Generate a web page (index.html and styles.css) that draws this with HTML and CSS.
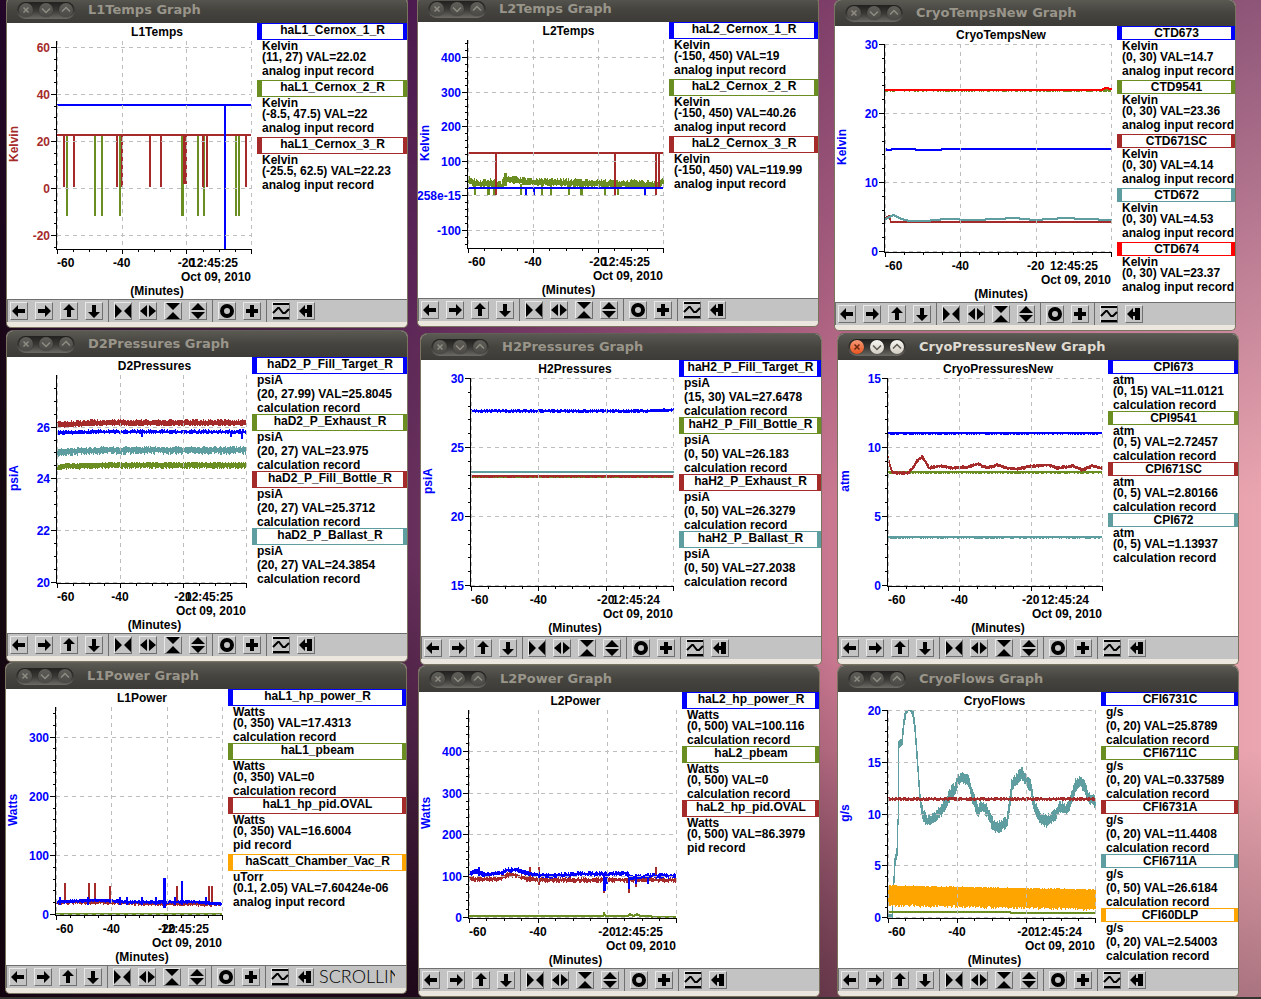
FILE: index.html
```html
<!DOCTYPE html>
<html lang="en">
<head>
  <meta charset="UTF-8" />
  <meta name="viewport" content="width=device-width, initial-scale=1.0"/>
  <title>Target Strip Charts</title>
  <link rel="stylesheet" href="styles.css">
</head>
<body>
  <main class="desktop" id="desktop"></main>
  <div class="panel-edge"></div>
  <script src="script.js"></script>
</body>
</html>
```

FILE: styles.css
```css
body {
  margin: 0;
  height: 100vh;
  overflow: hidden;
  font-family: "Liberation Sans", Arial, sans-serif;
  background:
    radial-gradient(ellipse 60% 50% at 30% 105%, rgba(15, 0, 12, 0.85), rgba(15, 0, 12, 0)),
    linear-gradient(to bottom, rgba(50, 5, 65, 0.5) 0%, rgba(60, 10, 70, 0) 50%, rgba(20, 0, 15, 0) 75%, rgba(20, 0, 15, 0.3) 100%),
    linear-gradient(to right, #14070f 0%, #260f22 3%, #67305c 33%, #c97890 66%, #eaa6b0 100%);
}

.desktop {
  position: relative;
  height: 100%;
}

.panel-edge {
  position: absolute;
  left: 0;
  right: 0;
  bottom: 0;
  height: 2px;
  background: #35332f;
}

/* windows on the desktop */
.window {
  position: absolute;
  width: 400px;
  border: 1px solid #7a735f;
  border-top-color: #62605a;
  border-radius: 7px 7px 5px 5px;
  background: #ece7de;
  padding-bottom: 5px;
  overflow: hidden;
}

.win-l1temps { left: 6px; top: -4px; }
.win-l2temps { left: 417px; top: -5px; }
.win-cryotemps { left: 834px; top: -1px; }
.win-d2pressures { left: 6px; top: 330px; }
.win-h2pressures { left: 420px; top: 333px; }
.win-cryopressures { left: 837px; top: 333px; }
.win-l1power { left: 5px; top: 662px; }
.win-l2power { left: 418px; top: 665px; }
.win-cryoflows { left: 837px; top: 665px; }

.titlebar {
  display: flex;
  align-items: center;
  gap: 13px;
  height: 26px;
  padding-left: 10px;
  background: linear-gradient(#5a5952, #45443f 50%, #3c3b37);
}

.titlebar h2 {
  margin: 0;
  font: bold 13px/26px "DejaVu Sans", sans-serif;
  color: #99958a;
}

.active .titlebar h2 {
  color: #dfdbd2;
}

.win-buttons {
  display: flex;
  align-items: center;
  gap: 6px;
  height: 17px;
  width: 54px;
  padding: 0 2px;
  border-radius: 9px;
  background: linear-gradient(#22211f, #3a3936 50%, #6c6b65);
}

.win-buttons button {
  width: 14px;
  height: 14px;
  padding: 0;
  border: 0;
  border-radius: 50%;
  background: linear-gradient(#5f5e59, #4a4945);
  box-shadow: 0 0 1px #1c1b19;
  color: #8f8c83;
}

.active .win-buttons button {
  background: linear-gradient(#f8f6f2, #d2cdc3);
  color: #5a5850;
}

.active .win-buttons button.close {
  background: linear-gradient(#f79a76, #e9541f);
  color: #6b2710;
}

.win-buttons svg {
  display: block;
  width: 14px;
  height: 14px;
  fill: none;
  stroke: currentColor;
  stroke-width: 1.5;
}

.content {
  display: flex;
  height: 276px;
  background: #fff;
}

/* chart */
.chart {
  flex: 1;
  min-width: 0;
  overflow: hidden;
}

.chart svg {
  display: block;
  width: 100%;
  height: 276px;
}

.chart text {
  font-size: 12px;
  font-weight: bold;
}

.mid { text-anchor: middle; }
.end { text-anchor: end; }

.axis {
  stroke: #000;
  shape-rendering: crispEdges;
}

.grid {
  stroke: #bebebe;
  stroke-dasharray: 4 4;
  shape-rendering: crispEdges;
}

.trace {
  fill: none;
  shape-rendering: crispEdges;
}

/* legend */
.legend {
  flex: none;
  font-size: 12px;
  font-weight: bold;
  line-height: 12px;
  white-space: nowrap;
  overflow: hidden;
}

.legend dl {
  margin: 0;
}

.legend dt {
  box-sizing: border-box;
  height: 14px;
  border-style: solid;
  border-width: 1px 4px 1px 5px;
  text-align: center;
}

.legend dt.tall {
  height: 17px;
}

.legend dd {
  margin: 0;
  padding-left: 5px;
  height: 14px;
}

.legend .unit { height: 11px; }
.legend .unit.tall { height: 14px; }
.legend .record { height: 12px; }
.legend .record.tall { height: 15px; }

.blue { border-color: #0000ff; stroke: #0000ff; }
.green { border-color: #6b8e23; stroke: #6b8e23; }
.brown { border-color: #a52a2a; stroke: #a52a2a; }
.teal { border-color: #5f9ea0; stroke: #5f9ea0; }
.orange { border-color: #ffa500; stroke: #ffa500; }
.red { border-color: #ff0000; stroke: #ff0000; }

.label-blue { fill: #0000ff; }
.label-brown { fill: #a52a2a; }

/* toolbar */
.toolbar {
  box-sizing: border-box;
  display: flex;
  height: 23px;
  border-top: 1px solid #6f6f6f;
  background: #c3c3c3;
}

.group {
  display: flex;
  align-items: center;
  gap: 7px;
  padding: 0 5px;
  border-left: 1px solid #6f6f6f;
}

.group:first-child {
  padding-left: 2px;
}

.group button {
  box-sizing: border-box;
  width: 18px;
  height: 18px;
  padding: 0;
  border: 1px solid;
  border-color: #e9e9e9 #6f6f6f #6f6f6f #e9e9e9;
  background: #c3c3c3;
}

.group svg {
  display: block;
  margin: -1px;
  width: 18px;
  height: 18px;
}

.status {
  width: 76px;
  overflow: hidden;
  white-space: nowrap;
  font: 300 18px/21px Lato, "Liberation Sans", sans-serif;
}
```

FILE: script.js
```js
// plot area inside the graph column
const LEFT = 50, TOP = 18, BOTTOM = 225;

// trace: color, [x, y] points, noise above, noise below, half thickness
// spikes: color, y from, y to, list of x, width
const windows = [
  {
    id: "l1temps", name: "L1Temps", unit: "Kelvin", label: "brown", legend: 150,
    min: -25.5, max: 62.5, major: 20, minor: 5, time: "12:45:25",
    pens: [
      ["blue", "haL1_Cernox_1_R", "Kelvin", "(11, 27) VAL=22.02", "analog input record"],
      ["green", "haL1_Cernox_2_R", "Kelvin", "(-8.5, 47.5) VAL=22", "analog input record"],
      ["brown", "haL1_Cernox_3_R", "Kelvin", "(-25.5, 62.5) VAL=22.23", "analog input record"]
    ],
    draw: [
      { c: "green", spikes: [60, 88, 95, 113, 191, 197, 229, 232], y: [112, 193] },
      { c: "green", spikes: [175], y: [112, 193], w: 3 },
      { c: "brown", spikes: [57, 67, 110, 115, 143, 154, 196, 200, 239], y: [112, 164] },
      { c: "brown", spikes: [178], y: [112, 161], w: 4 },
      { c: "brown", pts: [[50, 112], [244, 112]] },
      { c: "blue", spikes: [218], y: [82, 226] },
      { c: "blue", pts: [[50, 82], [244, 82]] }
    ]
  },
  {
    id: "l2temps", name: "L2Temps", unit: "Kelvin", label: "blue", legend: 149,
    min: -150, max: 450, major: 100, minor: 20, zero: "258e-15", time: "12:45:25",
    pens: [
      ["blue", "haL2_Cernox_1_R", "Kelvin", "(-150, 450) VAL=19", "analog input record"],
      ["green", "haL2_Cernox_2_R", "Kelvin", "(-150, 450) VAL=40.26", "analog input record"],
      ["brown", "haL2_Cernox_3_R", "Kelvin", "(-150, 450) VAL=119.99", "analog input record"]
    ],
    draw: [
      { c: "green", pts: [[50, 157], [55, 161], [62, 162], [72, 161], [84, 164], [87, 157], [110, 160], [150, 161], [200, 162], [240, 163], [246, 159]], up: 3, down: 2, half: 2 },
      { c: "green", spikes: [57, 76, 103, 124, 133, 151, 187, 200, 238], y: [162, 173] },
      { c: "green", spikes: [70, 163], y: [162, 173], w: 3 },
      { c: "green", spikes: [87], y: [151, 164], w: 3 },
      { c: "brown", spikes: [78, 197, 238], y: [131, 173] },
      { c: "brown", spikes: [241], y: [131, 165] },
      { c: "brown", pts: [[50, 131], [245, 131]] },
      { c: "blue", spikes: [108, 116, 227], y: [166, 173] },
      { c: "blue", pts: [[50, 166], [245, 166]] }
    ]
  },
  {
    id: "cryotemps", name: "CryoTempsNew", unit: "Kelvin", label: "blue", legend: 118,
    min: 0, max: 30, major: 10, minor: 2, time: "12:45:25",
    pens: [
      ["blue", "CTD673", "Kelvin", "(0, 30) VAL=14.7", "analog input record"],
      ["green", "CTD9541", "Kelvin", "(0, 30) VAL=23.36", "analog input record"],
      ["brown", "CTD671SC", "Kelvin", "(0, 30) VAL=4.14", "analog input record"],
      ["teal", "CTD672", "Kelvin", "(0, 30) VAL=4.53", "analog input record"],
      ["red", "CTD674", "Kelvin", "(0, 30) VAL=23.37", "analog input record"]
    ],
    draw: [
      { c: "green", pts: [[50, 64], [276, 64]], down: 1 },
      { c: "brown", pts: [[50, 192], [54, 190], [56, 196], [277, 196]] },
      { c: "teal", pts: [[50, 193], [59, 189], [67, 193], [75, 195], [90, 195], [110, 193], [140, 194], [180, 192], [200, 194], [230, 192], [250, 193], [277, 194]] },
      { c: "blue", pts: [[50, 123], [53, 124], [60, 123], [80, 123], [82, 124], [105, 124], [108, 123], [277, 123]] },
      { c: "red", pts: [[50, 64], [266, 64], [271, 62], [277, 63]] }
    ]
  },
  {
    id: "d2pressures", name: "D2Pressures", unit: "psiA", label: "blue", legend: 155,
    min: 20, max: 27.99, major: 2, minor: 0.5, time: "12:45:25",
    pens: [
      ["blue", "haD2_P_Fill_Target_R", "psiA", "(20, 27.99) VAL=25.8045", "calculation record"],
      ["green", "haD2_P_Exhaust_R", "psiA", "(20, 27) VAL=23.975", "calculation record"],
      ["brown", "haD2_P_Fill_Bottle_R", "psiA", "(20, 27) VAL=25.3712", "calculation record"],
      ["teal", "haD2_P_Ballast_R", "psiA", "(20, 27) VAL=24.3854", "calculation record"]
    ],
    draw: [
      { c: "brown", pts: [[50, 68], [90, 66], [239, 66]], up: 2, down: 1, half: 2 },
      { c: "teal", pts: [[50, 95], [100, 93], [239, 93]], up: 2, down: 3, half: 2 },
      { c: "green", pts: [[50, 111], [56, 109], [110, 108], [239, 108]], up: 1, down: 2, half: 2 },
      { c: "blue", pts: [[50, 76], [90, 75], [239, 75]], up: 2, down: 1 },
      { c: "blue", spikes: [135, 224], y: [75, 80] },
      { c: "blue", spikes: [235], y: [75, 82] }
    ]
  },
  {
    id: "h2pressures", name: "H2Pressures", unit: "psiA", label: "blue", legend: 142,
    min: 15, max: 30, major: 5, minor: 1, time: "12:45:24",
    pens: [
      ["blue", "haH2_P_Fill_Target_R", "psiA", "(15, 30) VAL=27.6478", "calculation record"],
      ["green", "haH2_P_Fill_Bottle_R", "psiA", "(0, 50) VAL=26.183", "calculation record"],
      ["brown", "haH2_P_Exhaust_R", "psiA", "(0, 50) VAL=26.3279", "calculation record"],
      ["teal", "haH2_P_Ballast_R", "psiA", "(0, 50) VAL=27.2038", "calculation record"]
    ],
    draw: [
      { c: "green", pts: [[50, 117], [253, 117]] },
      { c: "brown", pts: [[50, 116], [253, 116]], down: 1 },
      { c: "teal", pts: [[50, 112], [253, 112]] },
      { c: "blue", pts: [[50, 51], [220, 51], [253, 50]], up: 1, down: 1 }
    ]
  },
  {
    id: "cryopressures", name: "CryoPressuresNew", unit: "atm", label: "blue", legend: 130, active: true,
    min: 0, max: 15, major: 5, minor: 1, time: "12:45:24",
    pens: [
      ["blue", "CPI673", "atm", "(0, 15) VAL=11.0121", "calculation record"],
      ["green", "CPI9541", "atm", "(0, 5) VAL=2.72457", "calculation record"],
      ["brown", "CPI671SC", "atm", "(0, 5) VAL=2.80166", "calculation record"],
      ["teal", "CPI672", "atm", "(0, 5) VAL=1.13937", "calculation record"]
    ],
    draw: [
      { c: "green", pts: [[50, 112], [264, 112]], down: 1 },
      { c: "brown", pts: [[50, 98], [54, 112], [60, 113], [70, 113], [75, 108], [79, 101], [84, 97], [87, 101], [91, 108], [102, 106], [114, 108], [130, 107], [140, 104], [149, 108], [159, 105], [169, 108], [180, 109], [194, 106], [210, 105], [220, 108], [235, 106], [244, 110], [254, 106], [264, 108]], up: 1, down: 1 },
      { c: "teal", pts: [[50, 177], [264, 177]], down: 1 },
      { c: "blue", pts: [[50, 73], [264, 73]], down: 1 }
    ]
  },
  {
    id: "l1power", name: "L1Power", unit: "Watts", label: "blue", legend: 178, status: "SCROLLING",
    min: 0, max: 350, major: 100, minor: 20, time: "12:45:25",
    pens: [
      ["blue", "haL1_hp_power_R", "Watts", "(0, 350) VAL=17.4313", "calculation record"],
      ["green", "haL1_pbeam", "Watts", "(0, 350) VAL=0", "calculation record"],
      ["brown", "haL1_hp_pid.OVAL", "Watts", "(0, 350) VAL=16.6004", "pid record"],
      ["orange", "haScatt_Chamber_Vac_R", "uTorr", "(0.1, 2.05) VAL=7.60424e-06", "analog input record"]
    ],
    draw: [
      { c: "green", pts: [[50, 225], [216, 225]] },
      { c: "brown", pts: [[50, 213], [100, 213], [130, 214], [216, 215]], up: 1, down: 2 },
      { c: "brown", spikes: [59, 83, 89], y: [194, 213] },
      { c: "brown", spikes: [104, 171, 203, 206], y: [197, 213] },
      { c: "blue", pts: [[50, 213], [90, 211], [120, 213], [190, 213], [216, 215]], up: 1, down: 1 },
      { c: "blue", spikes: [54, 82, 114, 121, 136, 150, 169, 200], y: [208, 216] },
      { c: "blue", spikes: [158], y: [189, 219], w: 3 },
      { c: "blue", spikes: [176], y: [192, 216] }
    ]
  },
  {
    id: "l2power", name: "L2Power", unit: "Watts", label: "blue", legend: 137,
    min: 0, max: 499, major: 100, minor: 20, time: "12:45:25",
    pens: [
      ["blue", "haL2_hp_power_R", "Watts", "(0, 500) VAL=100.116", "calculation record"],
      ["green", "haL2_pbeam", "Watts", "(0, 500) VAL=0", "calculation record"],
      ["brown", "haL2_hp_pid.OVAL", "Watts", "(0, 500) VAL=86.3979", "pid record"]
    ],
    draw: [
      { c: "green", pts: [[50, 224], [184, 224], [185, 221], [187, 224], [209, 224], [211, 222], [214, 224], [218, 222], [221, 224], [232, 224], [234, 225], [257, 225]] },
      { c: "brown", pts: [[50, 187], [80, 187], [88, 183], [96, 183], [108, 187], [125, 188], [257, 188]], up: 2, down: 2 },
      { c: "brown", spikes: [120], y: [175, 193] },
      { c: "brown", spikes: [111, 237], y: [175, 189] },
      { c: "brown", spikes: [185, 210], y: [187, 201] },
      { c: "brown", spikes: [217], y: [187, 195] },
      { c: "blue", pts: [[50, 182], [58, 179], [66, 183], [83, 181], [88, 178], [98, 178], [110, 182], [130, 184], [160, 182], [200, 182], [206, 181], [213, 186], [230, 184], [257, 184]], up: 2, down: 2 },
      { c: "blue", spikes: [185], y: [182, 199], w: 3 },
      { c: "blue", spikes: [188, 217, 229], y: [182, 192] },
      { c: "blue", spikes: [210], y: [182, 197] },
      { c: "blue", spikes: [60], y: [175, 184] }
    ]
  },
  {
    id: "cryoflows", name: "CryoFlows", unit: "g/s", label: "blue", legend: 137,
    min: 0, max: 20, major: 5, minor: 1, time: "12:45:24",
    pens: [
      ["blue", "CFI6731C", "g/s", "(0, 20) VAL=25.8789", "calculation record"],
      ["green", "CFI6711C", "g/s", "(0, 20) VAL=0.337589", "calculation record"],
      ["brown", "CFI6731A", "g/s", "(0, 20) VAL=11.4408", "calculation record"],
      ["teal", "CFI6711A", "g/s", "(0, 50) VAL=26.6184", "calculation record"],
      ["orange", "CFI60DLP", "g/s", "(0, 20) VAL=2.54003", "calculation record"]
    ],
    draw: [
      { c: "teal", pts: [[50, 225], [54, 225], [55, 196], [56, 188], [57, 170], [59, 160], [60, 130], [61, 53], [64, 50], [66, 30], [68, 19], [70, 16], [73, 16], [75, 21], [77, 36], [79, 63], [82, 105], [83, 113]], up: 1, down: 1, half: 3 },
      { c: "teal", pts: [[83, 113], [85, 123], [89, 129], [97, 126], [104, 118], [109, 110], [113, 101], [117, 97], [120, 88], [127, 86], [131, 90], [135, 106], [140, 119], [145, 114], [150, 121], [155, 133], [160, 136], [169, 130], [172, 110], [174, 93], [180, 86], [184, 81], [187, 87], [193, 95], [196, 113], [202, 126], [209, 130], [217, 123], [222, 115], [229, 118], [234, 106], [238, 93], [242, 89], [247, 96], [250, 106], [254, 107], [258, 113]], up: 4, down: 3, half: 3 },
      { c: "brown", pts: [[50, 107], [257, 107]], up: 1, down: 1 },
      { c: "green", pts: [[50, 220], [172, 220], [173, 221], [257, 221]] },
      { c: "orange", pts: [[50, 203], [258, 207]], up: 1, down: 3, half: 9 }
    ]
  }
];

const tools = [
  [
    ["Pan left", '<path d="M2 9L8 3v4h7v4H8v4z"/>'],
    ["Pan right", '<path d="M16 9L10 3v4H3v4h7v4z"/>'],
    ["Pan up", '<path d="M9 2L3 8h4v7h4V8h4z"/>'],
    ["Pan down", '<path d="M9 16L3 10h4V3h4v7h4z"/>']
  ],
  [
    ["Zoom in x", '<path d="M1 2L8 9 1 16zM17 2L10 9 17 16z"/>'],
    ["Zoom out x", '<path d="M8 3v12L1 9zM10 3v12L17 9z"/>'],
    ["Zoom in y", '<path d="M2 1H16L9 8zM2 17H16L9 10z"/>'],
    ["Zoom out y", '<path d="M2 8H16L9 1zM2 10H16L9 17z"/>']
  ],
  [
    ["Auto scroll", '<circle cx="9" cy="9" r="5" fill="none" stroke="#000" stroke-width="4"/>'],
    ["Reset", '<path d="M7 3h4v4h4v4h-4v4H7v-4H3V7h4z"/>']
  ],
  [
    ["Controls", '<path d="M1 1H17V3H1zM1 15H17V17H1z"/><path d="M1 11L6 6H7L11 11H13L17 7" fill="none" stroke="#000" stroke-width="2"/>'],
    ["Dismiss", '<path d="M2 9L8 3v4h2V3h5v12h-5v-4H8v4z"/>']
  ]
];

let seed = 7;
function rnd() {
  seed = (seed * 16807) % 2147483647;
  return seed / 2147483647;
}

function yAt(pts, x) {
  for (let i = 1; i < pts.length; i++) {
    const [x0, y0] = pts[i - 1], [x1, y1] = pts[i];
    if (x <= x1) return y0 + (y1 - y0) * (x - x0) / (x1 - x0);
  }
  return pts[pts.length - 1][1];
}

// one vertical run of pixels for each column
function trace(t) {
  if (t.spikes) {
    const d = t.spikes.map(x => `M${x} ${t.y[0]}V${t.y[1]}`).join("");
    return `<path class="trace ${t.c}" stroke-width="${t.w || 2}" d="${d}"/>`;
  }
  const half = t.half || 1;
  const end = t.pts[t.pts.length - 1][0];
  let d = "";
  for (let x = t.pts[0][0]; x < end; x++) {
    const a = yAt(t.pts, x), b = yAt(t.pts, x + 1);
    const y0 = Math.max(TOP, Math.round(Math.min(a, b) - half - rnd() * (t.up || 0)));
    const y1 = Math.min(BOTTOM + 1, Math.round(Math.max(a, b) + half + rnd() * (t.down || 0)));
    d += `M${x + 0.5} ${y0}V${y1}`;
  }
  return `<path class="trace ${t.c}" d="${d}"/>`;
}

function chart(w) {
  const right = 400 - w.legend - 6;
  const mid = (LEFT + right) / 2 + 3;
  const toY = v => Math.round(BOTTOM - (v - w.min) / (w.max - w.min) * (BOTTOM - TOP)) + 0.5;
  let grid = "", axis = "", labels = "";

  for (let v = Math.ceil(w.min / w.minor) * w.minor; v <= w.max; v += w.minor) {
    const y = toY(v);
    if (v % w.major === 0) {
      axis += `M44 ${y}H50`;
      grid += `M${LEFT} ${y}H${right}`;
      labels += `<text class="end label-${w.label}" x="43" y="${y + 4}">${v === 0 && w.zero ? w.zero : v}</text>`;
    } else {
      axis += `M47 ${y}H50`;
    }
  }
  for (let i = 0; i <= 12; i++) {
    const x = Math.round(LEFT + (right - LEFT) * i / 12) + 0.5;
    axis += `M${x} 226V${i % 4 ? 229 : 231}`;
    if (i % 4 === 0) grid += `M${x} ${TOP}V226`;
  }
  axis += `M49.5 ${TOP}V227M49 226.5H${right + 1}`;
  const third = (right - LEFT) / 3;

  return `<svg role="img" aria-label="${w.name} strip chart">
    <text class="mid" x="${mid}" y="13">${w.name}</text>
    <text class="mid label-${w.label}" transform="translate(11 121) rotate(-90)">${w.unit}</text>
    ${w.draw.map(trace).join("")}
    <path class="grid" d="${grid}"/><path class="axis" d="${axis}"/>
    ${labels}
    <text x="${LEFT}" y="244">-60</text>
    <text class="mid" x="${LEFT + third}" y="244">-40</text>
    <text class="mid" x="${LEFT + 2 * third}" y="244">-20</text>
    <text class="mid" x="${right - 37}" y="244">${w.time}</text>
    <text class="end" x="${right}" y="258">Oct 09, 2010</text>
    <text class="mid" x="${mid}" y="272">(Minutes)</text>
  </svg>`;
}

const tall = s => /[gpqy_]/.test(s) ? "tall" : "";

function pen([color, name, unit, value, record]) {
  return `<dl>
    <dt class="${color} ${tall(name)}">${name}</dt>
    <dd class="unit ${tall(unit)}">${unit}</dd>
    <dd>${value}</dd>
    <dd class="record ${tall(record)}">${record}</dd>
  </dl>`;
}

const toolbar = tools.map(g => `<div class="group">${g.map(([label, icon]) =>
  `<button type="button" aria-label="${label}"><svg viewBox="0 0 18 18">${icon}</svg></button>`).join("")}</div>`).join("");

document.getElementById("desktop").innerHTML = windows.map(w => `
  <section class="window win-${w.id} ${w.active ? "active" : ""}">
    <header class="titlebar">
      <div class="win-buttons">
        <button type="button" class="close" aria-label="Close"><svg viewBox="0 0 14 14"><path d="M4.500 4.500l5 5M9.500 4.500l-5 5"/></svg></button>
        <button type="button" aria-label="Minimize"><svg viewBox="0 0 14 14"><path d="M3 5.500l4 4 4-4"/></svg></button>
        <button type="button" aria-label="Maximize"><svg viewBox="0 0 14 14"><path d="M3 8.500l4-4 4 4"/></svg></button>
      </div>
      <h2>${w.name} Graph</h2>
    </header>
    <div class="content">
      <div class="chart">${chart(w)}</div>
      <div class="legend" style="width: ${w.legend}px">${w.pens.map(pen).join("")}</div>
    </div>
    <div class="toolbar">${toolbar}${w.status ? `<span class="status">${w.status}</span>` : ""}</div>
  </section>`).join("");
```
